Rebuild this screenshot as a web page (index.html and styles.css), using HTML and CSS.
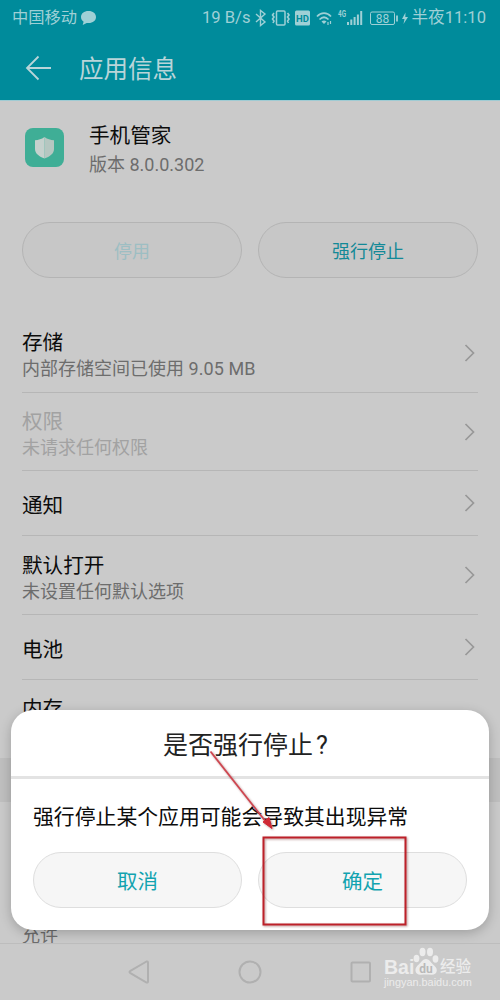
FILE: index.html
```html
<!DOCTYPE html>
<html lang="zh-CN">
<head>
<meta charset="utf-8">
<title>应用信息</title>
<link rel="stylesheet" href="styles.css">
</head>
<body>
<div class="phone">
  <header class="topbar">
    <div class="status">
      <span class="carrier">中国移动</span>
      <svg class="bubble" width="17" height="16" viewBox="0 0 17 16"><path d="M8.500 1C4 1 1 3.600 1 7c0 2 1 3.700 2.600 4.800L2.700 15l4-2c.6.1 1.200.1 1.800.1C13 13.100 16 10.400 16 7S13 1 8.500 1z" fill="currentColor"/></svg>
      <span class="speed">19 B/s</span>
      <svg class="indicators" width="156" height="20" viewBox="0 0 156 20" fill="none" stroke="currentColor">
        <path d="M2 6l9 8-4.500 3.500v-15L11 6l-9 8" stroke-width="1.400"/>
        <rect x="22.500" y="3" width="8.500" height="14" rx="1" stroke-width="1.500"/>
        <path d="M20 5l-1.500 2 1.500 2-1.500 2 1.500 2-1 2M33.500 5l1.500 2-1.500 2 1.500 2-1.500 2 1 2" stroke-width="1.600"/>
        <rect x="41" y="2.500" width="15" height="15" rx="1.500" fill="currentColor" stroke="none"/>
        <path d="M63 8.500c4-4.500 10-4.500 14 0M65.500 11.500c3-3 6-3 9 0" stroke-width="1.700"/>
        <path d="M67.500 13.500q2.500-2 5 0l-2.500 2.500z" fill="currentColor" stroke="none"/>
        <path d="M74 14v3M76.500 13v3" stroke-width="1.200"/>
        <path d="M94 17v-3M97.300 17v-5.500M100.600 17V9M103.900 17V6.500M107.200 17V3" stroke-width="2"/>
        <rect x="116.500" y="4" width="24" height="12.500" rx="1.500" stroke-width="1"/>
        <path d="M143 7.500v6" stroke-width="1.800"/>
        <path d="M151.500 4.500L148 11h2.500l-1 5 4.500-7h-2.700z" fill="currentColor" stroke="none"/>
        <text class="hd" x="48.500" y="13.500">HD</text>
        <text class="net" x="84" y="8.500" textLength="8" lengthAdjust="spacingAndGlyphs">4G</text>
        <text class="charge" x="128.500" y="14.500">88</text>
      </svg>
      <span class="clock">半夜11:10</span>
    </div>
    <div class="titlebar">
      <svg width="27" height="26" viewBox="0 0 27 26"><path d="M13.500 1.500L2 13l11.500 11.500M2 13h24" fill="none" stroke="currentColor" stroke-width="1.800"/></svg>
      <h1 class="title">应用信息</h1>
    </div>
  </header>

  <section class="app">
    <svg class="appicon" width="39" height="39" viewBox="0 0 39 39"><rect width="39" height="39" rx="8" fill="#3fae96"/><path d="M19.500 9c3 2.200 6 2.900 9.500 3.200v9c0 4.500-4.500 7.300-9.500 9.300z" fill="#b5c7c1"/><path d="M19.500 9c-3 2.200-6 2.900-9.500 3.200v9c0 4.500 4.500 7.300 9.500 9.300z" fill="#c5d1cd"/></svg>
    <div class="appmeta">
      <div class="name">手机管家</div>
      <div class="sub">版本 8.0.0.302</div>
    </div>
  </section>

  <div class="actions">
    <div class="action off">停用</div>
    <div class="action">强行停止</div>
  </div>

  <main class="list">
    <div class="row tall"><div><div class="name">存储</div><div class="sub">内部存储空间已使用 <span class="num">9.05 MB</span></div></div><svg class="chev" width="12" height="20" viewBox="0 0 12 20"><path d="M1.500 2l8 8-8 8"/></svg></div>
    <div class="row tall dim"><div><div class="name">权限</div><div class="sub">未请求任何权限</div></div><svg class="chev" width="12" height="20" viewBox="0 0 12 20"><path d="M1.500 2l8 8-8 8"/></svg></div>
    <div class="row"><div class="name">通知</div><svg class="chev" width="12" height="20" viewBox="0 0 12 20"><path d="M1.500 2l8 8-8 8"/></svg></div>
    <div class="row tall"><div><div class="name">默认打开</div><div class="sub">未设置任何默认选项</div></div><svg class="chev" width="12" height="20" viewBox="0 0 12 20"><path d="M1.500 2l8 8-8 8"/></svg></div>
    <div class="row"><div class="name">电池</div><svg class="chev" width="12" height="20" viewBox="0 0 12 20"><path d="M1.500 2l8 8-8 8"/></svg></div>
    <div class="row memory"><div class="name">内存</div></div>
  </main>
  <div class="band"></div>
  <div class="permission"><div class="sub">允许</div></div>

  <footer class="nav">
    <svg width="22" height="24" viewBox="0 0 22 24"><path d="M18.500 1.500L2 11.200q-1 .8 0 1.600L18.500 22.500q1.500.3 1.500-1V2.500q0-1.300-1.500-1z"/></svg>
    <svg width="24" height="24" viewBox="0 0 24 24"><circle cx="12" cy="12" r="10.500"/></svg>
    <svg width="22" height="22" viewBox="0 0 22 22"><rect x="1.500" y="1.500" width="18.500" height="19" rx="1"/></svg>
  </footer>

  <div class="dialog">
    <h2 class="question">是否强行停止<span class="mark">?</span></h2>
    <div class="body">
      <p class="message">强行停止某个应用可能会导致其出现异常</p>
      <div class="choices">
        <div class="choice">取消</div>
        <div class="choice">确定</div>
      </div>
    </div>
  </div>

  <svg class="marks" width="500" height="1000" viewBox="0 0 500 1000">
    <path d="M210.500 751.500L266 822" stroke="#cf4650" stroke-width="1.800"/>
    <path d="M272 828.500L263 822l6-4.500z" fill="#cf2834" stroke="#cf2834"/>
    <rect x="263.500" y="837.500" width="142" height="87" fill="none" stroke="#bd2029" stroke-width="2"/>
  </svg>

  <div class="watermark">
    <div class="brand">
      <span class="bai">Bai</span>
      <svg class="paw" width="26" height="29" viewBox="0 0 26 29" fill="currentColor"><ellipse cx="3.500" cy="11.500" rx="2.900" ry="3.700"/><ellipse cx="9.500" cy="5" rx="3" ry="4.200"/><ellipse cx="17" cy="5" rx="3" ry="4.200"/><ellipse cx="22.500" cy="12" rx="2.900" ry="3.700"/><path d="M13 12c-3 0-4.500 3-7 5.200C3.500 19.500 2 21 2.500 24c.5 3 3 4 5.500 3.700 3-.4 7-.4 10 0 3 .3 5.500-1 5.800-4 .3-3-1.800-4.500-4-6.500C17.500 15 16 12 13 12z"/><text class="du" x="13" y="25.500">du</text></svg>
      <span class="jing">经验</span>
    </div>
    <div class="site">jingyan.baidu.com</div>
  </div>
</div>
</body>
</html>
```
FILE: styles.css
```css
* { box-sizing: border-box; }
body {
  margin: 0;
  background: #cacaca;
  font-family: Roboto, "Noto Sans CJK SC", sans-serif;
  color: #0c0c0c;
}
.phone {
  position: relative;
  width: 500px;
  height: 1000px;
  overflow: hidden;
  display: flex;
  flex-direction: column;
  white-space: nowrap;
}
.topbar {
  height: 101px;
  flex: none;
  background: #008b9b;
  border-bottom: 1px solid #9fcbd3;
  color: #b9d5d9;
}
.status {
  height: 35px;
  padding: 0 14px 0 12px;
  display: flex;
  align-items: center;
  font-size: 16.3px;
  line-height: 20px;
  color: #9fd0d6;
}
.carrier { padding-top: 1px; }
.bubble { margin-left: 3px; }
.speed { margin-left: auto; font-size: 16.6px; }
.indicators { margin-left: 4px; margin-right: 1px; flex: none; }
.indicators text { stroke: none; fill: currentColor; }
.indicators .hd { font-size: 9.5px; font-weight: 700; fill: #008b9b; text-anchor: middle; }
.indicators .net { font-size: 9.5px; font-weight: 700; }
.indicators .charge { font-size: 12px; text-anchor: middle; }
.clock { font-size: 16.6px; padding-top: 1px; }
.titlebar {
  height: 65px;
  padding-left: 25px;
  display: flex;
  align-items: center;
  gap: 27px;
}
.title { margin: 0; padding-top: 4px; font-size: 24.5px; font-weight: 400; line-height: 34px; }
.app {
  height: 121px;
  flex: none;
  padding: 21px 0 0 25px;
  display: flex;
  gap: 25px;
}
.appicon { margin-top: 6px; }
.name { font-size: 20.6px; line-height: 28px; }
.sub { font-size: 18px; line-height: 25px; color: #6d6d6d; }
.num { letter-spacing: .1px; }
.appmeta .name { line-height: 29px; }
.appmeta .sub { line-height: 27px; }
.actions {
  height: 92px;
  flex: none;
  padding: 0 22px;
  display: flex;
  gap: 16px;
}
.action {
  flex: 1;
  height: 56px;
  border: 1px solid #b4b4b4;
  border-radius: 28px;
  background: #c7c7c7;
  color: #138997;
  font-size: 18px;
  line-height: 57px;
  text-align: center;
}
.action.off { color: #9dbec3; }
.list { padding: 0 22px; flex: none; }
.row {
  height: 65px;
  border-bottom: 1px solid #b6b6b6;
  display: flex;
  align-items: center;
  justify-content: space-between;
}
.row > :first-child { padding-top: 5px; }
.row.tall { height: 78.7px; }
.row.tall .sub { line-height: 24px; }
.row.memory { height: 78px; align-items: flex-start; padding-top: 10px; border: 0; }
.dim .name, .dim .sub { color: #a2a2a2; }
.chev { margin-right: 2px; flex: none; }
.chev path { fill: none; stroke: #989898; stroke-width: 1.7; }
.band { height: 44px; flex: none; background: #bfbfbf; }
.permission { flex: 1; padding: 0 22px; display: flex; align-items: flex-end; }
.permission .sub { line-height: 14px; }
.nav {
  height: 57px;
  flex: none;
  border-top: 1px solid #bdbdbd;
  padding: 0 128px;
  display: flex;
  align-items: center;
  justify-content: space-between;
}
.nav svg { fill: none; stroke: #b0b0b0; stroke-width: 2; }
.dialog {
  position: absolute;
  left: 11px;
  top: 710px;
  width: 478px;
  height: 220px;
  background: #fff;
  border-radius: 22px;
  box-shadow: 0 3px 12px rgba(0, 0, 0, .22);
}
.question {
  margin: 0;
  height: 69px;
  border-bottom: 3px solid #e3e3e3;
  padding-right: 9px;
  text-align: center;
  font-size: 25px;
  line-height: 71px;
  font-weight: 400;
  color: #222;
}
.mark { margin-left: 3px; }
.body { padding: 23px 22px 0; }
.message { margin: 0; font-size: 20.85px; line-height: 31px; }
.choices { display: flex; gap: 16px; padding-top: 19px; }
.choice {
  flex: 1;
  height: 56px;
  border: 1px solid #dedede;
  border-radius: 28px;
  background: #f6f6f6;
  color: #12a3b0;
  font-size: 20.5px;
  line-height: 58px;
  text-align: center;
}
.marks {
  position: absolute;
  left: 0;
  top: 0;
  filter: drop-shadow(1px 1px 1px rgba(90, 0, 0, .4));
}
.watermark { position: absolute; left: 384px; top: 946px; color: #ececec; }
.brand { display: flex; align-items: flex-end; height: 30px; }
.bai { font-family: "Liberation Sans", sans-serif; font-size: 19.5px; font-weight: 700; line-height: 18px; width: 29px; }
.paw { margin: 0; }
.du { font-size: 12px; font-weight: 700; fill: #b9b9b9; text-anchor: middle; }
.jing { font-size: 15.5px; line-height: 17px; margin-left: 1px; font-weight: 500; }
.site { font-family: "Liberation Sans", sans-serif; font-size: 10.9px; line-height: 13px; }
```
